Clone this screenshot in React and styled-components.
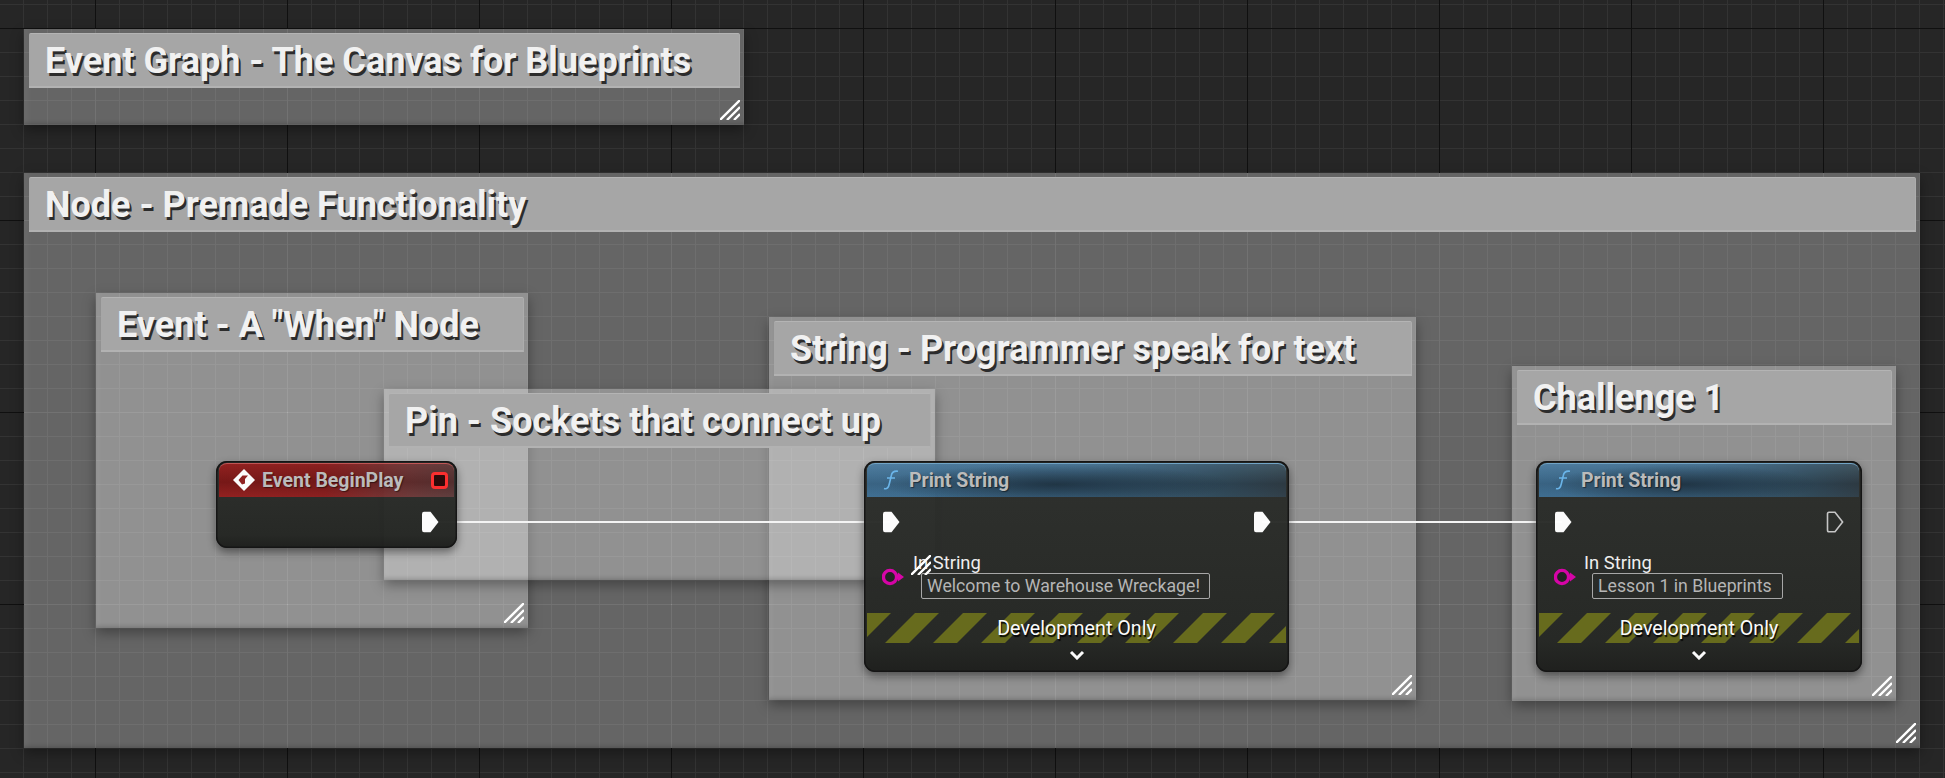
import React from "react";
import styled, { createGlobalStyle } from "styled-components";

const Global = createGlobalStyle`
  html, body { margin: 0; padding: 0; background: #262626; overflow: hidden; }
  * { box-sizing: border-box; }
`;

const Canvas = styled.div`
  position: relative;
  width: 1945px;
  height: 778px;
  overflow: hidden;
  font-family: Roboto, "Liberation Sans", sans-serif;
  background-color: #262626;
  background-image:
    linear-gradient(to right, #101010 1px, transparent 1px),
    linear-gradient(to bottom, #101010 1px, transparent 1px),
    linear-gradient(to right, #333333 1px, transparent 1px),
    linear-gradient(to bottom, #333333 1px, transparent 1px);
  background-size: 192px 192px, 192px 192px, 24px 24px, 24px 24px;
  background-position: 95px 0, 0 28px, 23px 0, 0 4px;
`;

const mod = (v, m) => ((v % m) + m) % m;

/* Inside a top-level comment the graph's heavy lines read as light ones. */
const Comment = styled.section`
  position: absolute;
  left: ${(p) => p.$x}px;
  top: ${(p) => p.$y}px;
  width: ${(p) => p.$w}px;
  height: ${(p) => p.$h}px;
  padding: 4px 4px 0 5px;
  background-color: rgba(255, 255, 255, 0.29);
  background-image:
    linear-gradient(to right, rgba(255, 255, 255, ${(p) => (p.$top ? 0.17 : 0)}) 1px, transparent 1px),
    linear-gradient(to bottom, rgba(255, 255, 255, ${(p) => (p.$top ? 0.17 : 0)}) 1px, transparent 1px);
  background-size: 192px 192px;
  background-position: ${(p) => mod(95 - p.$x, 192)}px 0, 0 ${(p) => mod(28 - p.$y, 192)}px;
  box-shadow: 0 5px 12px rgba(0, 0, 0, 0.35),
    inset 8px 0 8px -7px rgba(255, 255, 255, 0.08),
    inset 0 -4px 5px -3px rgba(0, 0, 0, 0.22);
`;

const CommentTitle = styled.h2`
  margin: 0;
  height: 55px;
  padding-left: 16px;
  padding-top: 2px;
  display: flex;
  align-items: center;
  background: #a6a6a6;
  border-top: 1px solid #b4b4b4;
  border-bottom: 2px solid #b2b2b2;
  border-right: 1px solid #adadad;
  border-radius: 2px 2px 0 0;
  font-size: 36px;
  font-weight: 700;
  line-height: 1;
  color: #f1f1f1;
  white-space: nowrap;
  text-shadow: 2px 3px 0 #2c2c2c;
`;

const GripIcon = styled.svg`
  position: absolute;
  right: 4px;
  bottom: 5px;
  width: 20px;
  height: 20px;
  z-index: 5;
`;

const Grip = () => (
  <GripIcon viewBox="0 0 20 20">
    <g stroke="#fff" strokeWidth="2.4">
      <path d="M0 20L20 0M7 20L20 7M14 20L20 14" />
    </g>
  </GripIcon>
);

const WireLayer = styled.svg`
  position: absolute;
  left: 0;
  top: 0;
  width: 1945px;
  height: 778px;
  z-index: 1;
`;

const Node = styled.article`
  position: absolute;
  z-index: 3;
  left: ${(p) => p.$x}px;
  top: 461px;
  width: ${(p) => p.$w}px;
  height: ${(p) => p.$h}px;
  display: flex;
  flex-direction: column;
  padding: 2px 3px 3px;
  border-radius: 11px;
  background: linear-gradient(#2c2e2b, #242623 85%, #1c1d1b);
  opacity: 0.97;
  box-shadow: inset 0 0 0 1.5px #121212, 0 4px 9px rgba(0, 0, 0, 0.45);
`;

const NodeHeader = styled.header`
  flex: none;
  height: 34px;
  display: flex;
  align-items: center;
  gap: ${(p) => p.$gap}px;
  padding-left: ${(p) => p.$pad}px;
  padding-bottom: 1px;
  border-radius: 8px 8px 0 0;
  border-top: 1px solid ${(p) => (p.$kind === "event" ? "#c25454" : "#70a5c8")};
  background: ${(p) =>
    p.$kind === "event"
      ? "linear-gradient(rgba(120,20,20,.15), rgba(60,0,0,.35) 55%, rgba(120,20,20,.1)), linear-gradient(90deg, #96201f, #8e1f1f 45%, #6d3c3c 80%, #5a4040)"
      : "radial-gradient(ellipse 42% 60% at 45% 62%, rgba(22,38,50,.75), transparent 100%), linear-gradient(rgba(120,170,205,.22), rgba(20,40,55,.2) 60%, rgba(50,90,120,.12)), linear-gradient(90deg, #3f7095, #3a6483 50%, #2e4655 85%, #2f3b42)"};
  color: #bdbdbd;
  font-size: 19.5px;
  font-weight: 700;
  white-space: nowrap;
  text-shadow: 1px 1px 1px rgba(0, 0, 0, 0.5);
`;

const DelegatePin = styled.span`
  margin-left: auto;
  margin-right: 6px;
  width: 17px;
  height: 17px;
  border: 3px solid #ff2b2b;
  border-radius: 4px;
  background: #2a0505;
`;

const ExecRow = styled.div`
  flex: none;
  height: 22px;
  margin-top: 14px;
  display: flex;
  justify-content: ${(p) => p.$align || "space-between"};
  padding: 0 15px;
`;

const ExecSvg = styled.svg`
  width: 18px;
  height: 22px;
`;

const ExecPin = ({ hollow }) => (
  <ExecSvg viewBox="0 0 18 22">
    <path
      d={hollow ? "M1.5 3Q1.5 1.2 3 1.2H9L16.6 11L9 20.8H3Q1.5 20.8 1.5 19Z" : "M1 3Q1 .8 3 .8H9.5L17.5 11L9.5 21.2H3Q1 21.2 1 19Z"}
      fill={hollow ? "none" : "#fff"}
      stroke={hollow ? "#c8c8c8" : "none"}
      strokeWidth="1.6"
    />
  </ExecSvg>
);

const InputRow = styled.div`
  position: relative;
  flex: none;
  margin-top: 19px;
  height: 46px;
  padding-left: ${(p) => p.$pad}px;
`;

const StringPin = styled.svg`
  position: absolute;
  left: 15px;
  top: 16px;
  width: 24px;
  height: 18px;
`;

const PinLabel = styled.div`
  height: 21px;
  font-size: 18.4px;
  line-height: 21px;
  color: #f2f2f2;
`;

const StringField = styled.div`
  width: ${(p) => p.$w}px;
  height: 26px;
  margin-left: 8px;
  padding-left: 5px;
  display: flex;
  align-items: center;
  border: 1.5px solid #a8a8a8;
  border-radius: 2px;
  font-size: 17.7px;
  color: #b7b7b7;
  white-space: nowrap;
`;

const HazardBand = styled.div`
  position: relative;
  flex: none;
  height: 30px;
  margin-top: 15px;
  display: flex;
  align-items: center;
  justify-content: center;
`;

const HazardArt = styled.svg`
  position: absolute;
  inset: 0;
  width: 100%;
  height: 100%;
`;

const BandLabel = styled.span`
  position: relative;
  font-size: 19.7px;
  color: #fff;
  white-space: nowrap;
  text-shadow: 1px 2px 1px #000;
`;

const Chevron = styled.svg`
  align-self: center;
  margin-top: 7px;
  width: 16px;
  height: 10px;
`;

const Hazard = ({ w }) => {
  const stripes = [];
  for (let k = 0; k * 48 - 30 < w; k++) {
    const a = k * 48;
    stripes.push(`${a},0 ${a + 24},0 ${a - 6},30 ${a - 30},30`);
  }
  return (
    <HazardArt viewBox={`0 0 ${w} 30`} preserveAspectRatio="none">
      {stripes.map((s) => (
        <polygon key={s} points={s} fill="#666a1a" />
      ))}
    </HazardArt>
  );
};

const FuncIcon = () => (
  <svg width="16" height="20" viewBox="0 0 16 20" fill="none" stroke="#69b6ec" strokeWidth="1.6">
    <path d="M1 18.5C4 19.6 5.6 17.5 6.4 13.5L8.3 5.5C9 2 11 .6 15 1.2M4 8H12" />
  </svg>
);

const EventIcon = () => (
  <svg width="24" height="24" viewBox="0 0 24 24">
    <path d="M12 1L23 12L12 23L1 12Z" fill="#fff" />
    <path d="M6.5 12L10.5 7.5H16L13 11V15.5L10 16.5Z" fill="#8f1f1f" />
  </svg>
);

const PrintString = ({ x, w, pinHollow, field, fieldW, inputPad }) => (
  <Node $x={x} $w={w} $h={211}>
    <NodeHeader $kind="func" $pad={16} $gap={10}>
      <FuncIcon />
      Print String
    </NodeHeader>
    <ExecRow>
      <ExecPin />
      <ExecPin hollow={pinHollow} />
    </ExecRow>
    <InputRow $pad={inputPad}>
      <StringPin viewBox="0 0 24 18">
        <circle cx="8" cy="9" r="6.6" fill="#1f1f1f" stroke="#d900a8" strokeWidth="3.4" />
        <path d="M16 4.5L22 9L16 13.5Z" fill="#d900a8" />
      </StringPin>
      <PinLabel>In String</PinLabel>
      <StringField $w={fieldW}>{field}</StringField>
    </InputRow>
    <HazardBand>
      <Hazard w={w - 6} />
      <BandLabel>Development Only</BandLabel>
    </HazardBand>
    <Chevron viewBox="0 0 16 10">
      <path d="M2 2L8 8L14 2" fill="none" stroke="#fff" strokeWidth="3" />
    </Chevron>
  </Node>
);

const comments = [
  { t: "Node - Premade Functionality", x: 24, y: 173, w: 1896, h: 575, top: true },
  { t: "Event Graph - The Canvas for Blueprints", x: 24, y: 29, w: 720, h: 96, top: true },
  { t: 'Event - A "When" Node', x: 96, y: 293, w: 432, h: 335 },
  { t: "String - Programmer speak for text", x: 769, y: 317, w: 647, h: 383 },
  { t: "Challenge 1", x: 1512, y: 366, w: 384, h: 335 },
  { t: "Pin - Sockets that connect up", x: 384, y: 389, w: 551, h: 191 },
];

export default function App() {
  return (
    <Canvas>
      <Global />
      {comments.map((c) => (
        <Comment key={c.t} $x={c.x} $y={c.y} $w={c.w} $h={c.h} $top={c.top}>
          <CommentTitle>{c.t}</CommentTitle>
          <Grip />
        </Comment>
      ))}
      <WireLayer viewBox="0 0 1945 778">
        <path d="M430 522H890M1262 522H1562" stroke="#f4f4f4" strokeWidth="2" fill="none" />
      </WireLayer>
      <Node $x={216} $w={241} $h={87}>
        <NodeHeader $kind="event" $pad={13} $gap={6}>
          <EventIcon />
          Event BeginPlay
          <DelegatePin />
        </NodeHeader>
        <ExecRow $align="flex-end">
          <ExecPin />
        </ExecRow>
      </Node>
      <PrintString x={864} w={425} field="Welcome to Warehouse Wreckage!" fieldW={289} inputPad={46} />
      <PrintString x={1536} w={326} pinHollow field="Lesson 1 in Blueprints" fieldW={191} inputPad={45} />
    </Canvas>
  );
}
